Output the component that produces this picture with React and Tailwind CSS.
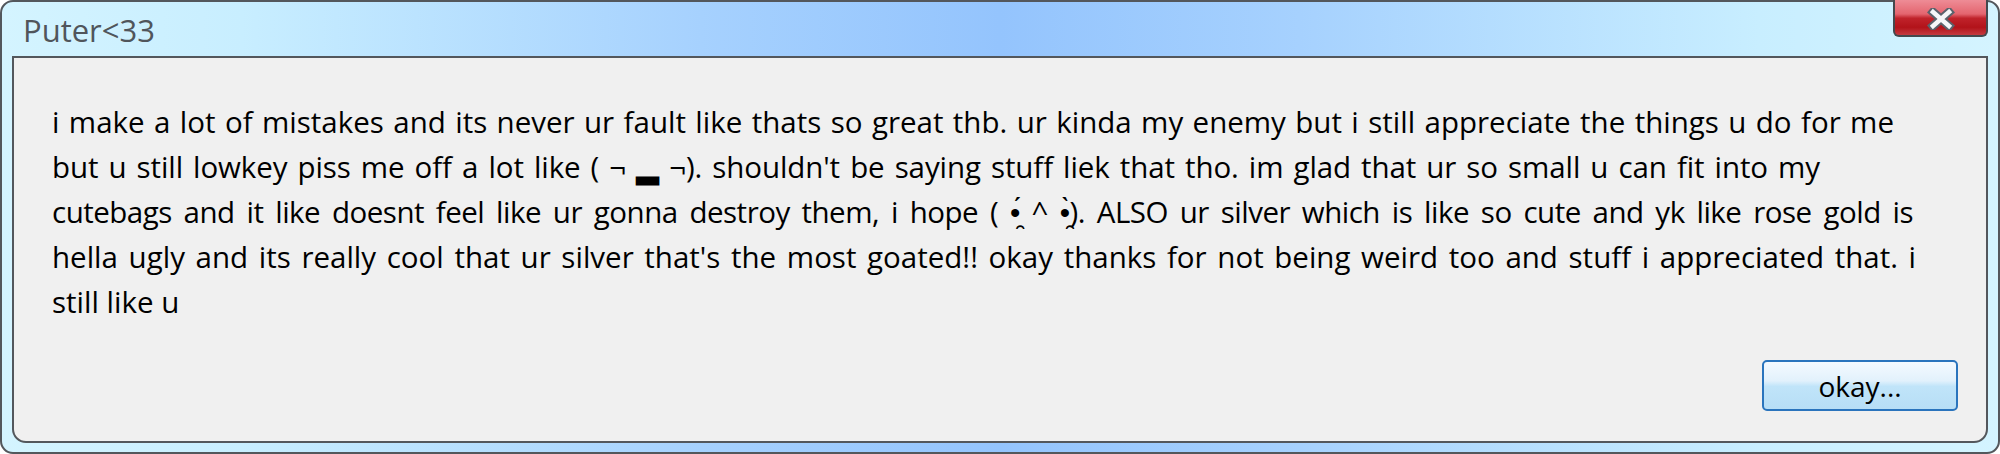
import React from "react";

// each line is justified to the width it has in the reference
const lines = [
  {
    text: "i make a lot of mistakes and its never ur fault like thats so great thb. ur kinda my enemy but i still appreciate the things u do for me",
    cls: "w-[1842px] text-justify [text-align-last:justify]",
  },
  {
    text: "but u still lowkey piss me off a lot like ( ¬ ▂ ¬). shouldn't be saying stuff liek that tho. im glad that ur so small u can fit into my",
    cls: "w-[1768px] tracking-[-0.1px] text-justify [text-align-last:justify]",
  },
  {
    text: "cutebags and it like doesnt feel like ur gonna destroy them, i hope ( •̯́ ^ •̯̀). ALSO ur silver which is like so cute and yk like rose gold is",
    cls: "w-[1861px] tracking-[-0.5px] text-justify [text-align-last:justify]",
  },
  {
    text: "hella ugly and its really cool that ur silver that's the most goated!! okay thanks for not being weird too and stuff i appreciated that. i",
    cls: "w-[1864px] text-justify [text-align-last:justify]",
  },
  { text: "still like u", cls: "" },
];

function CloseButton() {
  return (
    <button
      type="button"
      className="-mt-[2px] flex h-[37px] w-[95px] items-center justify-center rounded-b-[6px] border-2 border-t-0 border-[#44484d] bg-[linear-gradient(180deg,#ee8c96_0%,#e4656f_40%,#c0232b_52%,#b2131a_78%,#c43a40_100%)]"
    >
      <svg width="28" height="22" viewBox="0 0 28 22" className="mt-[2px]">
        <path d="M6 4 L22 18 M22 4 L6 18" stroke="#5b626c" strokeWidth="8.5" strokeLinecap="square" fill="none" />
        <path d="M6 4 L22 18 M22 4 L6 18" stroke="#f5f7f9" strokeWidth="4.5" strokeLinecap="square" fill="none" />
      </svg>
    </button>
  );
}

export default function App() {
  return (
    <div className="h-[454px] w-[2000px] bg-white font-['Open_Sans',sans-serif]">
      <div className="flex h-full flex-col rounded-[13px] border-2 border-[#53575c] bg-[linear-gradient(90deg,#d4f4ff_0%,#c8eeff_12%,#a6d1fe_35%,#94c4fd_50%,#a6d1fe_65%,#c8eeff_88%,#d4f4ff_100%)]">
        <div className="flex h-[54px] items-start justify-between pl-[21px] pr-[10px]">
          <span className="pt-px text-[31px] leading-[54px] text-[#50555b]">Puter&lt;33</span>
          <CloseButton />
        </div>

        <div className="mx-[10px] mb-[9px] flex flex-1 flex-col rounded-b-[14px] border-2 border-[#53575c] bg-[#f0f0f0] pb-[30px] pl-[38px] pr-[28px] pt-[41px]">
          <div className="text-[29.5px] leading-[45px] text-black">
            {lines.map((line) => (
              <div key={line.text} className={`whitespace-nowrap ${line.cls}`}>
                {line.text}
              </div>
            ))}
          </div>

          <div className="mt-auto flex justify-end">
            <button
              type="button"
              className="h-[51px] w-[196px] rounded-[5px] border-2 border-[#2a74bd] bg-[linear-gradient(180deg,#f4faff_0%,#e2f1fc_40%,#c0e4f9_52%,#b7def6_100%)] text-[28px] leading-none text-black"
            >
              okay...
            </button>
          </div>
        </div>
      </div>
    </div>
  );
}
